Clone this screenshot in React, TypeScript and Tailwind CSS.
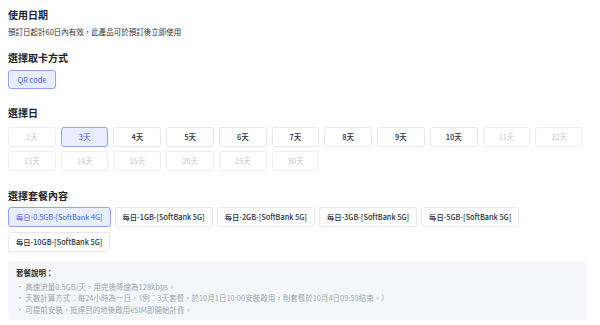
const days = [
    { label: "2天", disabled: true },
    { label: "3天", selected: true },
    { label: "4天" },
    { label: "5天" },
    { label: "6天" },
    { label: "7天" },
    { label: "8天" },
    { label: "9天" },
    { label: "10天" },
    { label: "11天", disabled: true },
    { label: "12天", disabled: true },
    { label: "13天", disabled: true },
    { label: "14天", disabled: true },
    { label: "15天", disabled: true },
    { label: "20天", disabled: true },
    { label: "25天", disabled: true },
    { label: "30天", disabled: true },
];

const packages = [
    "每日-0.5GB-[SoftBank 4G]",
    "每日-1GB-[SoftBank 5G]",
    "每日-2GB-[SoftBank 5G]",
    "每日-3GB-[SoftBank 5G]",
    "每日-5GB-[SoftBank 5G]",
    "每日-10GB-[SoftBank 5G]",
];

function chipClass(selected?: boolean, disabled?: boolean) {
    if (selected) return "border-[#8da2f8] bg-[#e9eeff] text-[#3f5bf0]";
    if (disabled) return "border-[#eceef2] bg-white text-[#c3c7cf]";
    return "border-[#e6e8ec] bg-white text-[#2b2f36] font-medium";
}

function SectionTitle({ children }: { children: string }) {
    return <h2 className="text-[10px] leading-[14px] font-bold text-[#1f2329]">{children}</h2>;
}

export default function App() {
    return (
        <div
            className="w-[600px] h-[325px] bg-white pl-2 pr-[13px] pt-[8px] overflow-hidden"
            style={{ fontFamily: '"Noto Sans CJK TC", "Noto Sans", sans-serif' }}
        >
            <SectionTitle>使用日期</SectionTitle>
            <p className="mt-[4px] text-[7.5px] leading-[12px] text-[#2b2f36]">
                預訂日起計60日內有效，此產品可於預訂後立即使用
            </p>

            <div className="mt-[13px]">
                <SectionTitle>選擇取卡方式</SectionTitle>
                <div className="mt-[5px] flex">
                    <button className="w-[48px] h-[19px] rounded-[3px] border text-[7.5px] border-[#8da2f8] bg-[#e9eeff] text-[#3f5bf0]">
                        QR code
                    </button>
                </div>
            </div>

            <div className="mt-[17px]">
                <SectionTitle>選擇日</SectionTitle>
                <div className="mt-[7px] w-[575px] grid grid-cols-11 gap-x-[5px] gap-y-[4px]">
                    {days.map((d) => (
                        <button
                            key={d.label}
                            className={`h-[20px] rounded-[3px] border text-[7.5px] ${chipClass(d.selected, d.disabled)}`}
                        >
                            {d.label}
                        </button>
                    ))}
                </div>
            </div>

            <div className="mt-[18px]">
                <SectionTitle>選擇套餐內容</SectionTitle>
                <div className="mt-[4px] flex flex-wrap gap-x-[4px] gap-y-[5px]">
                    {packages.map((p, i) => (
                        <button
                            key={p}
                            className={`h-[20px] px-[7px] rounded-[3px] border text-[7.3px] ${chipClass(i === 0, false)}`}
                        >
                            {p}
                        </button>
                    ))}
                </div>
            </div>

            <div className="mt-[9px] rounded-[3px] bg-[#f4f6fa] px-[8px] pt-[6px] pb-[5px] text-[7.5px] leading-[11.5px] text-[#a0a5ae]">
                <div className="font-bold text-[#2b2f36] mb-[2px]">套餐說明：</div>
                <div>· 高速流量0.5GB/天，用完後降速為128kbps。</div>
                <div>· 天數計算方式：每24小時為一日。（例：3天套餐，於10月1日10:00安裝啟用，則套餐於10月4日09:59結束。）</div>
                <div>· 可提前安裝，抵達目的地後啟用eSIM即開始計費。</div>
            </div>
        </div>
    );
}
